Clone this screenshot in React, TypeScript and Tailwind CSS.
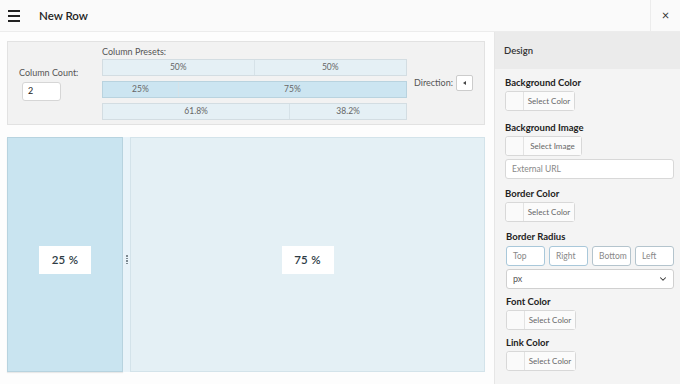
import { ChevronDown } from "lucide-react";

const font = { fontFamily: "Lato, 'Open Sans', sans-serif" };

function PresetBar({ left, right, split, active = false }: { left: string; right: string; split: string; active?: boolean }) {
  return (
    <div
      className={`flex h-[17px] border text-[8.5px] text-[#666] ${
        active ? "bg-[#cce5f1] border-[#b9d3df]" : "bg-[#e5f0f5] border-[#d3dde2]"
      }`}
    >
      <div className={`${split} flex items-center justify-center border-r border-[#d6e2e8]`}>{left}</div>
      <div className="flex-1 flex items-center justify-center">{right}</div>
    </div>
  );
}

function ColorButton({ label = "Select Color", w = "w-[70px]" }: { label?: string; w?: string }) {
  return (
    <div className={`flex h-[20px] ${w} border border-[#d8d8d8] rounded-[3px] bg-white`}>
      <div className="w-[18px] border-r border-[#e3e3e3] bg-[#fafafa] rounded-l-[3px]" />
      <div className="flex-1 flex items-center justify-center text-[8px] text-[#666] bg-[#fbfbfb]">{label}</div>
    </div>
  );
}

function Label({ children }: { children: React.ReactNode }) {
  return <div className="text-[9.5px] font-bold text-[#222] mb-[2px] leading-[12px]">{children}</div>;
}

export default function App() {
  return (
    <div className="w-[680px] h-[384px] bg-[#fdfdfd] flex flex-col overflow-hidden text-[#333]" style={font}>
      <header className="h-[32px] shrink-0 flex items-center bg-[#fafafa] border-b border-[#ececec]">
        <div className="w-[40px] flex justify-center pl-[1px] pr-[13px]">
          <div className="flex flex-col gap-[3px]">
            <span className="block w-[12px] h-[2px] bg-[#222]" />
            <span className="block w-[12px] h-[2px] bg-[#222]" />
            <span className="block w-[12px] h-[2px] bg-[#222]" />
          </div>
        </div>
        <div className="text-[11.5px] font-semibold text-[#222] -ml-[1px]">New Row</div>
        <div className="ml-auto w-[30px] h-full border-l border-[#ececec] flex items-center justify-center text-[13px] text-[#333]">
          ×
        </div>
      </header>

      <div className="flex flex-1 min-h-0">
        <main className="w-[494px] shrink-0 pt-[9px] pl-[7px] pr-[9px] flex flex-col">
          <section className="h-[84px] bg-[#f2f2f2] border border-[#e2e2e2] flex">
            <div className="w-[94px] pl-[11px] pt-[24px]">
              <div className="text-[9px] text-[#555] mb-[2px]">Column Count:</div>
              <div className="ml-[3px] w-[39px] h-[19px] bg-white border border-[#d6d6d6] rounded-[3px] text-[9px] flex items-center pl-[5px] text-[#222]">
                2
              </div>
            </div>
            <div className="w-[305px] pt-[4px] flex flex-col">
              <div className="text-[9px] text-[#555] leading-[12px] mb-[1px]">Column Presets:</div>
              <div className="flex flex-col gap-[5px]">
                <PresetBar left="50%" right="50%" split="w-1/2" />
                <PresetBar left="25%" right="75%" split="w-1/4" active />
                <PresetBar left="61.8%" right="38.2%" split="w-[61.8%]" />
              </div>
            </div>
            <div className="flex items-center pl-[7px] gap-[3px]">
              <span className="text-[9px] text-[#555]">Direction:</span>
              <div className="w-[17px] h-[16px] bg-white border border-[#ccc] rounded-[2px] flex items-center justify-center">
                <span className="block w-0 h-0 border-y-[2.5px] border-y-transparent border-r-[3px] border-r-[#444]" />
              </div>
            </div>
          </section>

          <section className="mt-[12px] h-[235px] flex">
            <div className="w-[116px] pt-[10px] bg-[#c9e4f0] border border-[#b7d3df] flex items-center justify-center shadow-[0_1px_1px_rgba(0,0,0,0.08)]">
              <div className="w-[52px] h-[28px] bg-white flex items-center justify-center text-[11.5px] font-semibold text-[#2d3b44] tracking-wide">
                25 %
              </div>
            </div>
            <div className="w-[7px] pt-[10px] bg-[#e8f3f9] flex items-center justify-center">
              <div className="flex flex-col gap-[1px]">
                <span className="block w-[2px] h-[1.5px] bg-[#7d8a92]" />
                <span className="block w-[2px] h-[1.5px] bg-[#7d8a92]" />
                <span className="block w-[2px] h-[1.5px] bg-[#7d8a92]" />
                <span className="block w-[2px] h-[1.5px] bg-[#7d8a92]" />
              </div>
            </div>
            <div className="flex-1 pt-[10px] bg-[#e4f0f5] border border-[#d3e3ea] flex items-center justify-center">
              <div className="w-[52px] h-[28px] bg-white flex items-center justify-center text-[11.5px] font-semibold text-[#2d3b44] tracking-wide">
                75 %
              </div>
            </div>
          </section>
        </main>

        <aside className="flex-1 min-w-0 bg-[#f4f4f4] border-l border-[#e6e6e6] flex flex-col">
          <div className="h-[37px] bg-[#ebebeb] flex items-center pl-[9px] pt-[2px] text-[9.5px] font-semibold text-[#333]">Design</div>
          <div className="pl-[10px] pr-[6px] pt-[8px] flex flex-col">
            <Label>Background Color</Label>
            <ColorButton />
            <div className="mt-[11px]">
              <Label>Background Image</Label>
            </div>
            <ColorButton label="Select Image" w="w-[77px]" />
            <div className="mt-[3px] h-[20px] bg-white border border-[#d8d8d8] rounded-[3px] flex items-center pl-[6px] text-[8.5px] text-[#888]">
              External URL
            </div>
            <div className="mt-[9px]">
              <Label>Border Color</Label>
            </div>
            <ColorButton />
            <div className="mt-[9px] pl-[1px]">
              <Label>Border Radius</Label>
            </div>
            <div className="flex gap-[4px] pl-[1px] mt-[1px]">
              {["Top", "Right", "Bottom", "Left"].map((p, i) => (
                <div
                  key={p}
                  className={`w-[40px] h-[20px] bg-white rounded-[3px] flex items-center pl-[6px] text-[8.5px] text-[#888] border ${
                    i < 2 ? "border-[#a9c8da]" : "border-[#b4c4cd]"
                  }`}
                >
                  {p}
                </div>
              ))}
            </div>
            <div className="mt-[3px] ml-[1px] h-[20px] bg-white border border-[#d0d0d0] rounded-[3px] flex items-center justify-between pl-[6px] pr-[5px] text-[9px] text-[#555]">
              <span>px</span>
              <ChevronDown size={10} strokeWidth={2.5} className="text-[#333]" />
            </div>
            <div className="mt-[7px] pl-[1px]">
              <Label>Font Color</Label>
            </div>
            <div className="pl-[1px]">
              <ColorButton />
            </div>
            <div className="mt-[7px] pl-[1px]">
              <Label>Link Color</Label>
            </div>
            <div className="pl-[1px]">
              <ColorButton />
            </div>
          </div>
        </aside>
      </div>
    </div>
  );
}
